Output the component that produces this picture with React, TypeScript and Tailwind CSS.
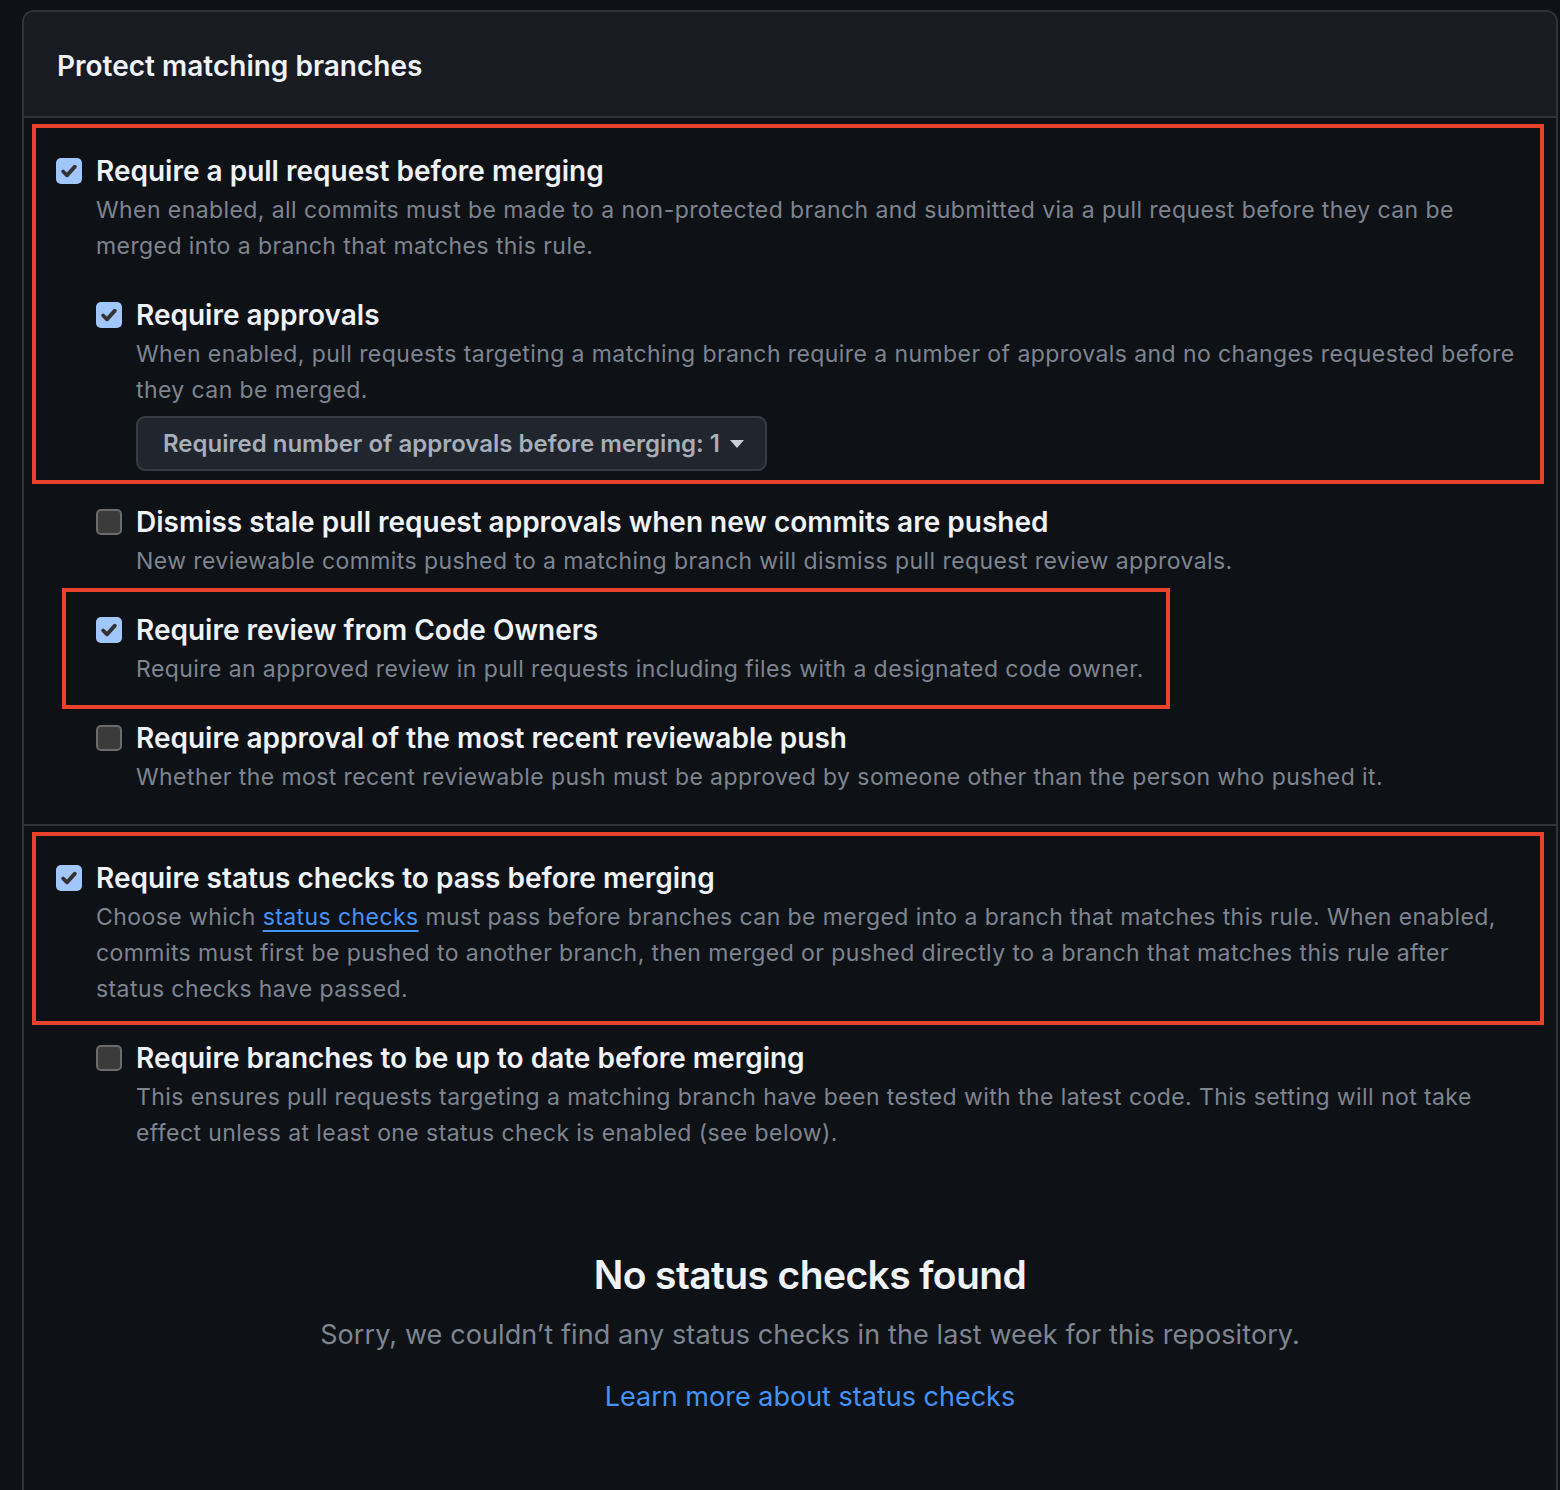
import React from "react";

type Props = {
  checked?: boolean;
  title: string;
  children?: React.ReactNode;
};

const CheckBox = ({ checked }: { checked?: boolean }) =>
  checked ? (
    <span className="mt-[6px] flex h-[26px] w-[26px] shrink-0 items-center justify-center rounded-[5px] bg-[#a0c6fa]">
      <svg width="20" height="20" viewBox="0 0 16 16" fill="none">
        <path d="M3.3 8.4 6.4 11.5 12.7 4.5" stroke="#333333" strokeWidth="3" strokeLinecap="round" strokeLinejoin="round" />
      </svg>
    </span>
  ) : (
    <span className="mt-[6px] block h-[26px] w-[26px] shrink-0 rounded-[5px] border-2 border-[#6b6b6b] bg-[#3b3b3b]" />
  );

const Option = ({ checked, title, children }: Props) => (
  <div className="flex gap-[14px]">
    <CheckBox checked={checked} />
    <div className="min-w-0 flex-1">
      <div className="text-[28px] font-semibold leading-[38px] text-[#eff2f6]">{title}</div>
      {children}
    </div>
  </div>
);

const Desc = ({ children }: { children: React.ReactNode }) => (
  <p className="mt-[2px] text-[23px] leading-9 tracking-[0.42px] text-[#7e8590]">{children}</p>
);

// red annotation frame drawn over a group
const Frame = ({ className }: { className: string }) => (
  <div className={`pointer-events-none absolute border-4 border-[#e8422d] ${className}`} />
);

export default function App() {
  return (
    <div
      className="min-h-[1490px] bg-[#0f1116] pl-[22px] pt-[10px]"
      style={{ fontFamily: "Inter, 'Noto Sans', sans-serif" }}
    >
      <div className="w-[1536px] overflow-hidden rounded-t-[12px] border-2 border-b-0 border-[#30333a] pb-[80px]">
        {/* Header */}
        <div className="flex h-[106px] items-center border-b-2 border-[#30333a] bg-[#181b22] px-[33px] pt-[3px]">
          <h2 className="text-[28px] font-semibold text-[#eff2f6]">Protect matching branches</h2>
        </div>

        {/* Pull request section */}
        <div className="flex flex-col gap-[32px] border-b-2 border-[#30333a] bg-[#0e1116] pb-[29px] pl-[32px] pr-[32px] pt-[34px]">
          <div className="relative flex flex-col gap-8">
            <Frame className="-left-[24px] -top-[28px] -right-[20px] -bottom-[13px]" />
            <Option checked title="Require a pull request before merging">
              <Desc>
                When enabled, all commits must be made to a non-protected branch and submitted via a pull request before they can be merged into a branch that matches this rule.
              </Desc>
            </Option>
            <div className="pl-[40px]">
              <Option checked title="Require approvals">
                <Desc>
                  When enabled, pull requests targeting a matching branch require a number of approvals and no changes requested before they can be merged.
                </Desc>
                <button className="mt-[8px] flex h-[55px] w-[631px] items-center gap-[9px] rounded-[9px] border-2 border-[#363b44] bg-[#21252d] pl-[25px] text-[24px] font-semibold text-[#a8aeb7]">
                  Required number of approvals before merging: 1
                  <svg width="16" height="10" viewBox="0 0 16 10">
                    <path d="M1 1h14L8 9z" fill="#c9ced6" />
                  </svg>
                </button>
              </Option>
            </div>
          </div>

          <div className="flex flex-col gap-8 pl-[40px]">
            <Option title="Dismiss stale pull request approvals when new commits are pushed">
              <Desc>New reviewable commits pushed to a matching branch will dismiss pull request review approvals.</Desc>
            </Option>
            <div className="relative">
              <Frame className="-left-[34px] -top-[23px] -bottom-[22px] w-[1108px]" />
              <Option checked title="Require review from Code Owners">
                <Desc>Require an approved review in pull requests including files with a designated code owner.</Desc>
              </Option>
            </div>
            <Option title="Require approval of the most recent reviewable push">
              <Desc>Whether the most recent reviewable push must be approved by someone other than the person who pushed it.</Desc>
            </Option>
          </div>
        </div>

        {/* Status checks section */}
        <div className="flex flex-col gap-8 bg-[#0e1116] px-[32px] pt-[33px]">
          <div className="relative">
            <Frame className="-left-[24px] -top-[27px] -right-[20px] -bottom-[18px]" />
            <Option checked title="Require status checks to pass before merging">
              <Desc>
                Choose which{" "}
                <a className="text-[#4493f8] underline decoration-[1.5px] underline-offset-[5px]">status checks</a> must pass before branches can be merged into a branch that matches this rule. When enabled, commits must first be pushed to another branch, then merged or pushed directly to a branch that matches this rule after status checks have passed.
              </Desc>
            </Option>
          </div>
          <div className="pl-[40px]">
            <Option title="Require branches to be up to date before merging">
              <Desc>
                This ensures pull requests targeting a matching branch have been tested with the latest code. This setting will not take effect unless at least one status check is enabled (see below).
              </Desc>
            </Option>
            <div className="mt-[100px] flex flex-col items-center text-center">
              <h3 className="text-[39px] font-semibold leading-[48px] tracking-[-0.6px] text-[#eff2f6]">No status checks found</h3>
              <p className="mt-[16px] text-[27px] leading-10 tracking-[0.1px] text-[#7e8590]">
                Sorry, we couldn’t find any status checks in the last week for this repository.
              </p>
              <a className="mt-[22px] text-[27px] leading-10 text-[#4493f8]">Learn more about status checks</a>
            </div>
          </div>
        </div>
      </div>
    </div>
  );
}
